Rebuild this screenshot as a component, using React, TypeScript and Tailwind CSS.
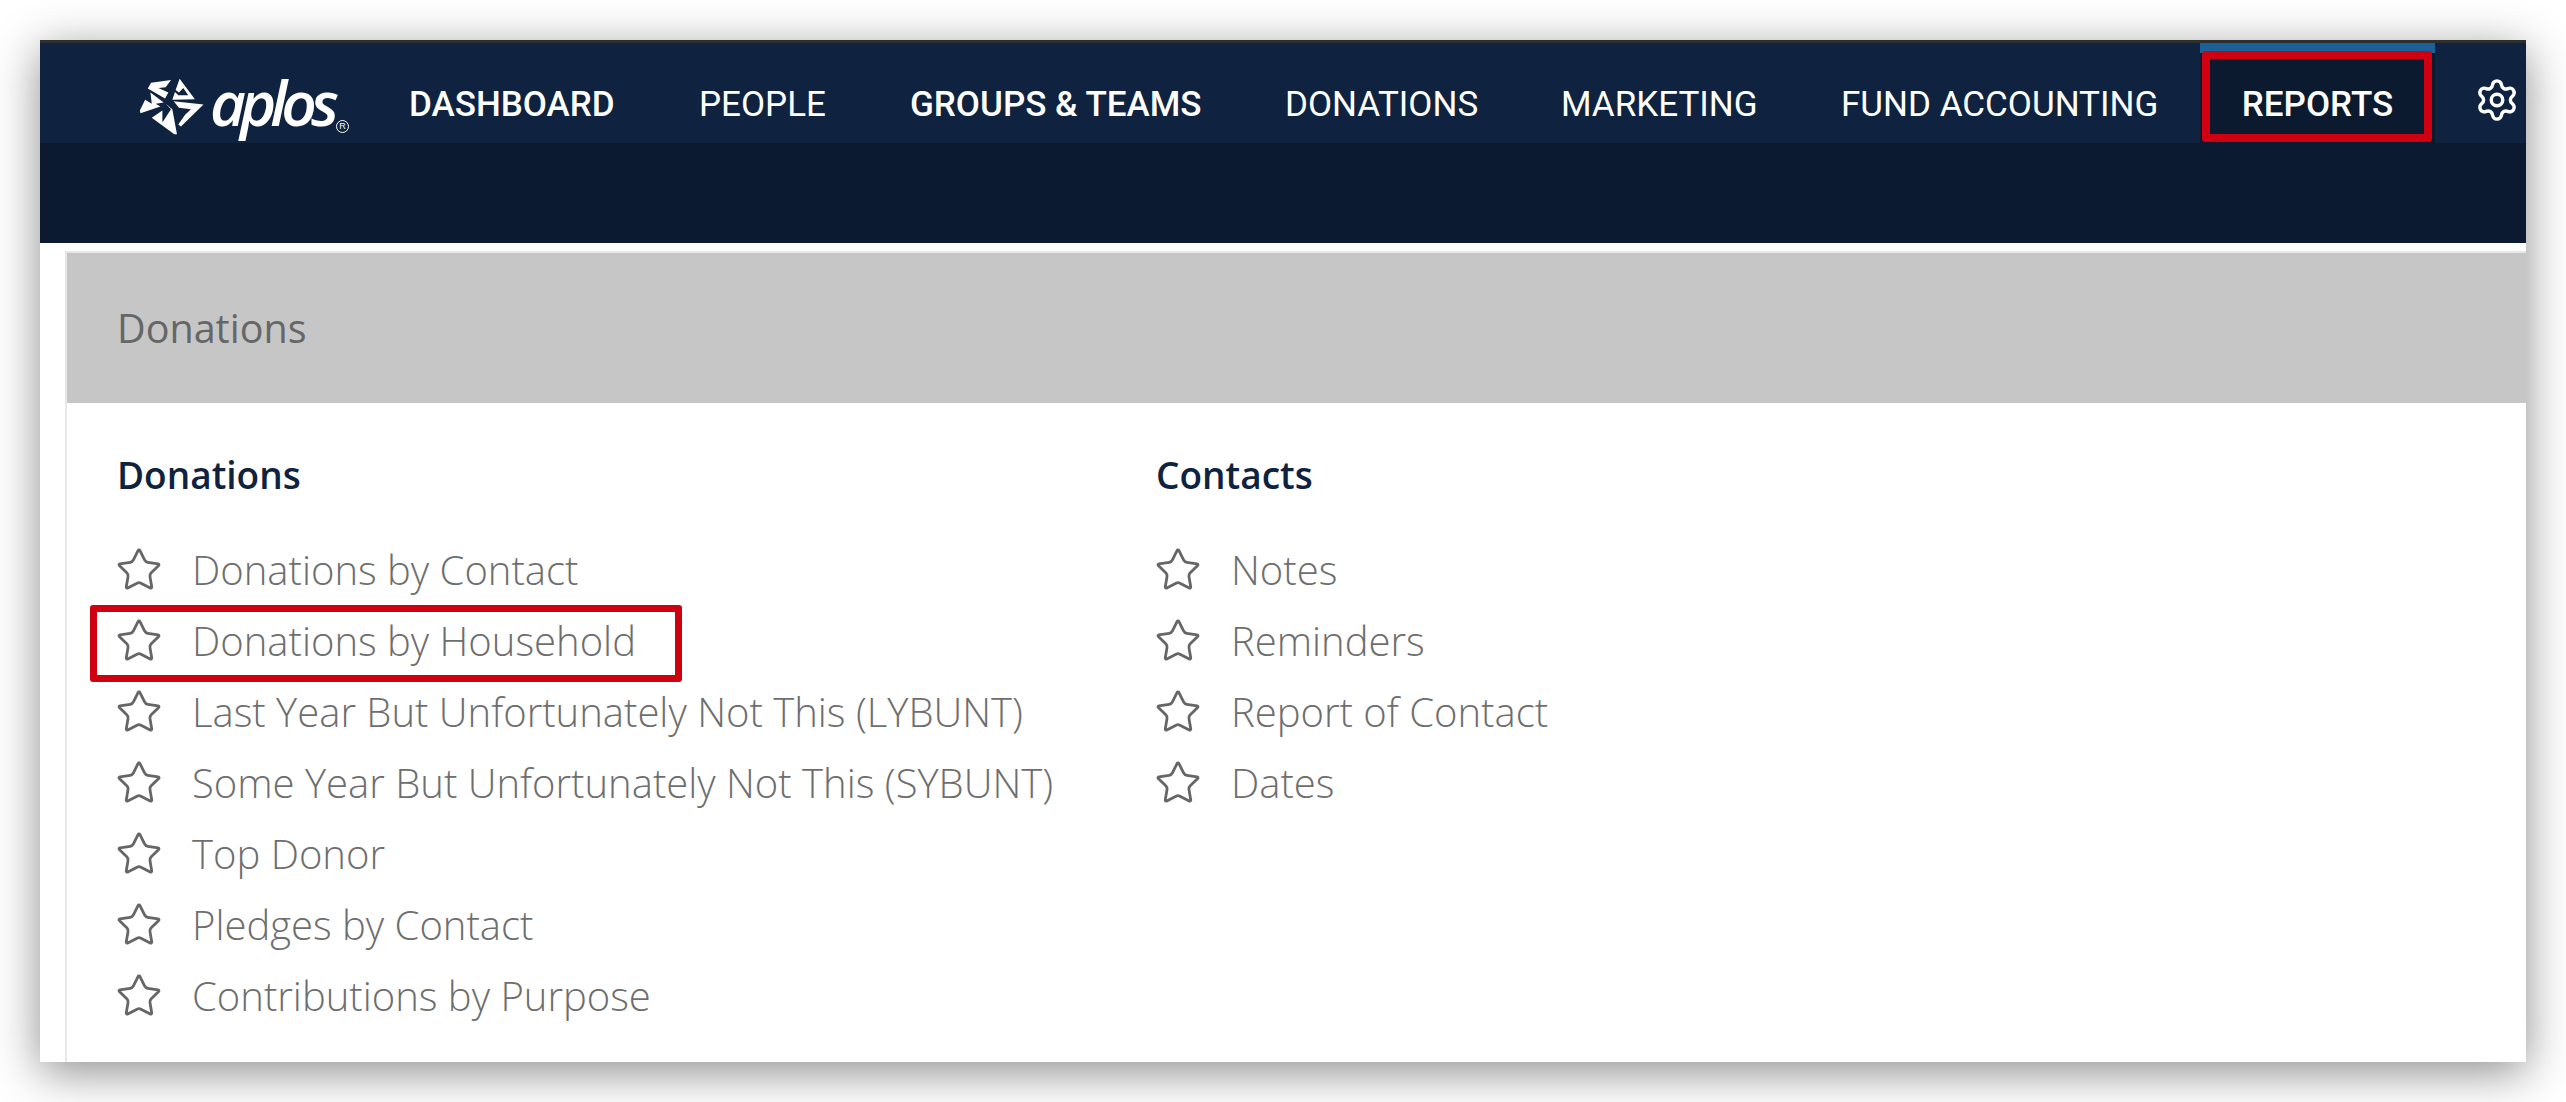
import { Settings, Star } from 'lucide-react';

const navItems = [
  { label: 'DASHBOARD', width: 'w-[290px]', cls: 'font-medium' },
  { label: 'PEOPLE', width: 'w-[211px]', cls: 'font-normal' },
  { label: 'GROUPS & TEAMS', width: 'w-[375px]', cls: 'font-medium' },
  { label: 'DONATIONS', width: 'w-[276px]', cls: 'font-normal' },
  { label: 'MARKETING', width: 'w-[280px]', cls: 'font-normal' },
  { label: 'FUND ACCOUNTING', width: 'w-[359px]', cls: 'font-normal' },
];

const donationReports = [
  'Donations by Contact',
  'Donations by Household',
  'Last Year But Unfortunately Not This (LYBUNT)',
  'Some Year But Unfortunately Not This (SYBUNT)',
  'Top Donor',
  'Pledges by Contact',
  'Contributions by Purpose',
];

const contactReports = ['Notes', 'Reminders', 'Report of Contact', 'Dates'];

function Logo() {
  return (
    <div className="relative flex items-center shrink-0 w-[274px] ml-[95px] h-full">
      <svg viewBox="0 0 216 187" className="w-[72px] h-[62px] mt-[28px] shrink-0" fill="#ffffff">
        <polygon points="38,38 48,20 108,12 92,34 70,36 100,50 90,68" />
        <polygon points="134,8 180,70 112,72 120,48 130,58 160,58 145,36 132,50 122,42" />
        <polygon points="116,76 206,86 138,152 130,146 150,118 168,100 132,96" />
        <polygon points="92,84 112,100 126,176 118,176 50,126 82,104 82,140 108,100" />
        <polygon points="46,50 86,80 62,84 76,92 16,112 14,104 30,72 50,84" />
      </svg>
      <span className="ml-[3px] mt-[18px] font-['Open_Sans'] italic font-semibold text-[62px] leading-none tracking-[-6px] text-white">
        aplos
      </span>
      <span className="absolute left-[201px] top-[77px] w-[13px] h-[13px] rounded-full border border-white text-white text-[9px] leading-[11px] text-center font-['Liberation_Sans']">
        R
      </span>
    </div>
  );
}

function ReportColumn({ title, items, width }: { title: string; items: string[]; width: string }) {
  return (
    <div className={width}>
      <h3 className="text-[37px] leading-[50px] font-semibold text-[#0f2340]">{title}</h3>
      <ul className="mt-[34px]">
        {items.map((item) => (
          <li key={item} className="flex items-center h-[71px]">
            <Star className="w-[48px] h-[48px] text-[#666666] shrink-0 -ml-[2px]" strokeWidth={1.4} />
            <span className="ml-[29px] text-[40px] font-light text-[#6e6e6e] whitespace-nowrap">{item}</span>
          </li>
        ))}
      </ul>
    </div>
  );
}

export default function App() {
  return (
    <div className="w-[2566px] h-[1102px] bg-white p-[40px] overflow-hidden font-['Open_Sans',sans-serif]">
      <div className="relative w-[2486px] h-[1022px] bg-white shadow-[0_10px_44px_rgba(0,0,0,0.45)] overflow-hidden border-t-[3px] border-[#2e2e2e]">
        <nav className="flex items-center h-[100px] bg-[#0f2340] text-white font-['Roboto',sans-serif] text-[35px]">
          <Logo />
          {navItems.map((item) => (
            <div key={item.label} className={`${item.width} shrink-0 mt-[24px] whitespace-nowrap ${item.cls}`}>
              {item.label}
            </div>
          ))}
          <div className="shrink-0 w-[235px] h-full flex items-center justify-center bg-[#0b1a2e] border-t-[10px] border-[#1b6197] font-medium">
            <span className="mt-[14px]">REPORTS</span>
          </div>
          <Settings className="shrink-0 ml-[39px] w-[46px] h-[46px] mt-[14px]" strokeWidth={1.8} />
        </nav>
        <div className="h-[100px] bg-[#0b1a30]" />
        <div className="ml-[25px] mt-[8px] border-l-[2px] border-t-[2px] border-[#e8e8e8] h-[811px]">
          <div className="h-[150px] bg-[#c6c6c6] flex items-center pl-[50px]">
            <span className="text-[39.5px] text-[#666666] mt-[2px]">Donations</span>
          </div>
          <div className="flex pl-[50px] pt-[47px]">
            <ReportColumn title="Donations" items={donationReports} width="w-[1039px]" />
            <ReportColumn title="Contacts" items={contactReports} width="w-[800px]" />
          </div>
        </div>
        {/* red annotation boxes */}
        <div className="absolute left-[2162px] top-[8px] w-[230px] h-[91px] border-[8px] border-[#cf000f] rounded-[3px]" />
        <div className="absolute left-[50px] top-[562px] w-[592px] h-[77px] border-[7px] border-[#cf000f] rounded-[3px]" />
      </div>
    </div>
  );
}
